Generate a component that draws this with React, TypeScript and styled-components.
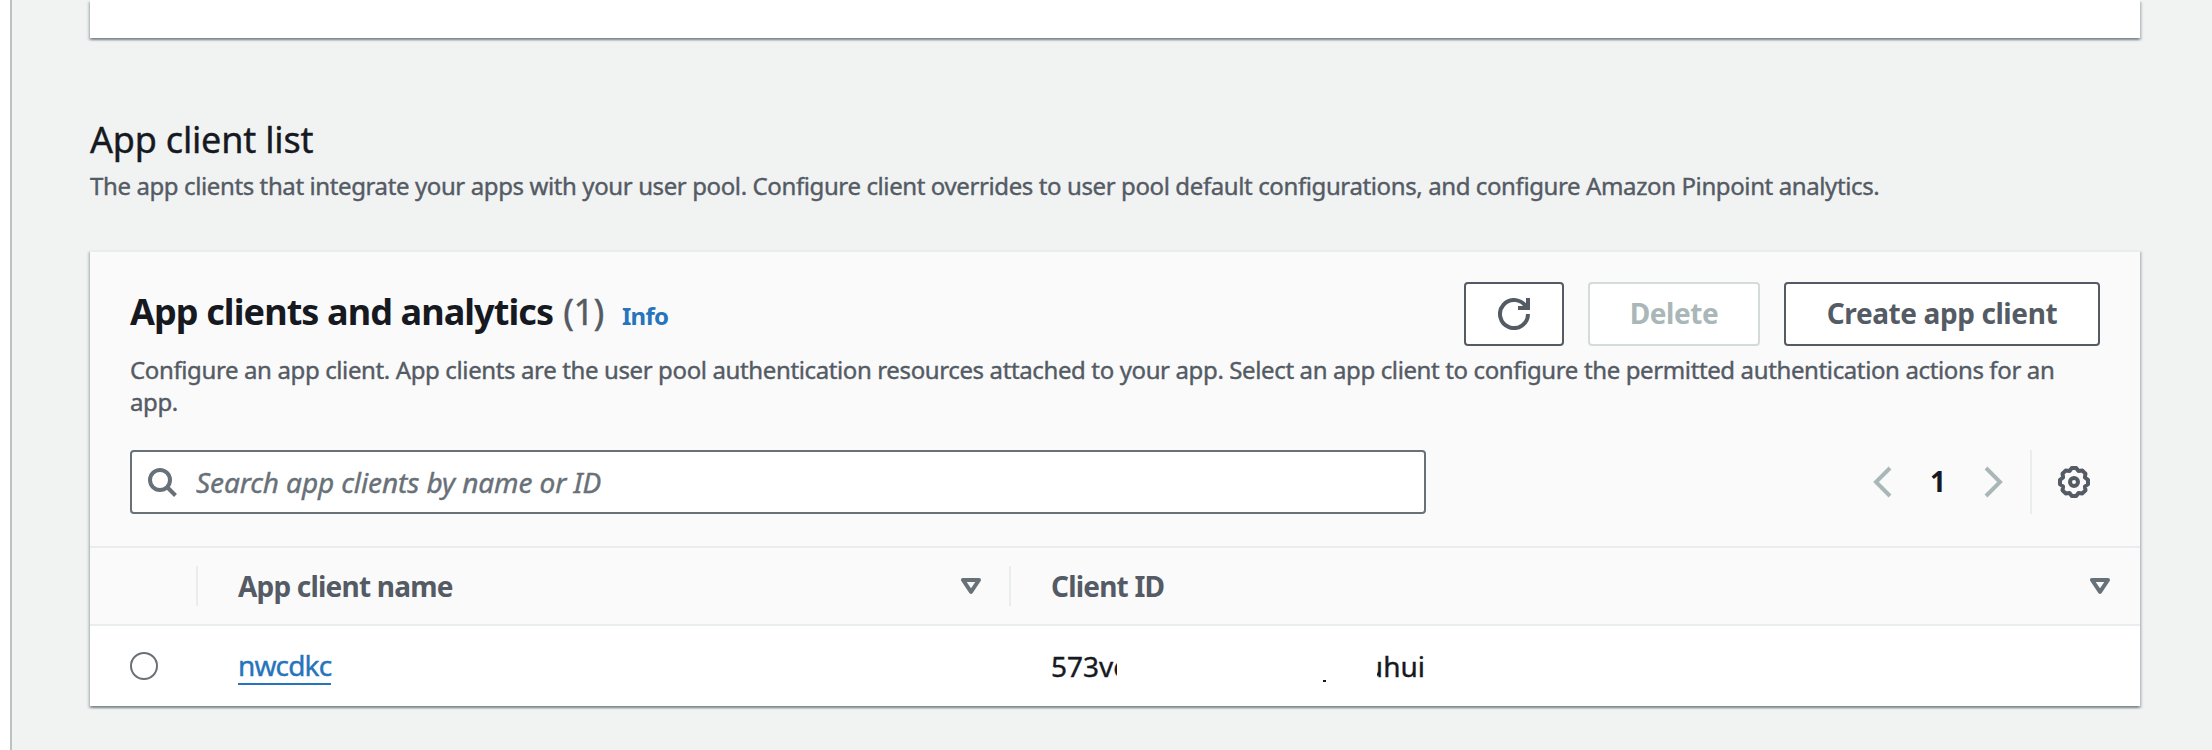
import React from "react";
import styled, { createGlobalStyle } from "styled-components";

const color = {
  page: "#f1f3f3",
  heading: "#16191f",
  text: "#545b64",
  icon: "#687078",
  disabled: "#aab7b8",
  disabledBorder: "#d5dbdb",
  divider: "#eaeded",
  link: "#2674bb",
};

const GlobalStyle = createGlobalStyle`
  * { box-sizing: border-box; }
  body {
    margin: 0;
    background: ${color.page};
    font-family: "Noto Sans", "Open Sans", sans-serif;
    color: ${color.heading};
  }
  h1, h2, p { margin: 0; }
`;

const Shell = styled.div`
  display: flex;
  height: 750px;
  overflow: hidden;
`;

const SideStrip = styled.div`
  flex: none;
  width: 12px;
  background: #fff;
  border-right: 2px solid #b9c3c4;
`;

const Content = styled.main`
  flex: none;
  width: 2128px;
  padding-left: 78px;
`;

const Panel = styled.section`
  background: #fff;
  box-shadow:
    0 2px 2px 0 rgba(0, 28, 36, 0.3),
    2px 2px 2px 0 rgba(0, 28, 36, 0.15),
    -2px 2px 2px 0 rgba(0, 28, 36, 0.15);
`;

const PreviousPanel = styled(Panel)`
  height: 38px;
`;

const ClientsPanel = styled(Panel)`
  margin-top: 48px;
  border-top: 2px solid ${color.divider};
`;

const PageHeading = styled.h1`
  margin-top: 80px;
  font-size: 36px;
  line-height: 44px;
  font-weight: 400;
  letter-spacing: -0.2px;
  -webkit-text-stroke: 0.4px;
`;

const Description = styled.p<{ $top: number; $spacing: number }>`
  margin-top: ${(p) => p.$top}px;
  font-size: 24px;
  line-height: 32px;
  letter-spacing: ${(p) => p.$spacing}px;
  color: ${color.text};
  -webkit-text-stroke: 0.4px;
`;

const PanelHeader = styled.header`
  padding: 30px 40px 32px;
  background: #fafafa;
  border-bottom: 2px solid ${color.divider};
`;

const HeaderRow = styled.div`
  display: flex;
  justify-content: space-between;
  align-items: flex-start;
`;

const TitleGroup = styled.div`
  display: flex;
  align-items: baseline;
  padding-top: 8px;
  line-height: 44px;
`;

const Title = styled.h2`
  font-size: 36px;
  font-weight: 700;
  letter-spacing: -0.9px;
`;

const Counter = styled.span`
  margin-left: 10px;
  font-size: 36px;
  letter-spacing: -0.5px;
  color: ${color.text};
  -webkit-text-stroke: 0.4px;
`;

const InfoLink = styled.a`
  margin-left: 18px;
  font-size: 24px;
  font-weight: 700;
  letter-spacing: -0.7px;
  color: ${color.link};
`;

const Actions = styled.div`
  display: flex;
  gap: 24px;
`;

const Button = styled.button<{ $width: number }>`
  display: flex;
  align-items: center;
  justify-content: center;
  width: ${(p) => p.$width}px;
  height: 64px;
  padding: 0 0 2px;
  border: 2px solid ${color.text};
  border-radius: 4px;
  background: #fff;
  font: 700 28px "Noto Sans", "Open Sans", sans-serif;
  letter-spacing: -0.4px;
  color: ${color.text};

  &:disabled {
    border-color: ${color.disabledBorder};
    color: ${color.disabled};
  }
`;

const IconButton = styled(Button)`
  padding: 0;
`;

const ToolRow = styled.div`
  display: flex;
  justify-content: space-between;
  height: 64px;
  margin-top: 32px;
`;

const SearchBox = styled.label`
  display: flex;
  align-items: center;
  width: 1296px;
  padding-left: 14px;
  border: 2px solid ${color.icon};
  border-radius: 4px;
  background: #fff;
`;

const SearchInput = styled.input`
  flex: 1;
  margin-left: 18px;
  padding: 0;
  border: 0;
  outline: 0;
  background: transparent;
  font: 400 28px "Noto Sans", "Open Sans", sans-serif;
  letter-spacing: -0.1px;
  -webkit-text-stroke: 0.4px;

  &::placeholder {
    color: ${color.icon};
    font-style: italic;
    opacity: 1;
  }
`;

const Pagination = styled.div`
  display: flex;
  align-items: center;
  margin-right: 10px;
`;

const PageNumber = styled.span`
  width: 92px;
  padding-bottom: 2px;
  font-size: 28px;
  font-weight: 700;
  text-align: center;
`;

const Divider = styled.span`
  width: 2px;
  height: 64px;
  margin: 0 26px;
  background: ${color.divider};
`;

const Row = styled.div`
  display: grid;
  grid-template-columns: 108px 813px 1fr;
  align-items: center;
`;

const ColumnRow = styled(Row)`
  height: 78px;
  background: #fafafa;
  border-bottom: 2px solid ${color.divider};
`;

const DataRow = styled(Row)`
  height: 80px;
  font-size: 28px;
  line-height: 38px;
  -webkit-text-stroke: 0.4px;
`;

const ColumnHeader = styled.div<{ $end: number; $divided?: boolean }>`
  display: flex;
  align-items: center;
  justify-content: space-between;
  height: 40px;
  padding: 0 ${(p) => p.$end}px 0 40px;
  border-right: ${(p) => (p.$divided ? `2px solid ${color.divider}` : "0")};
  font-size: 28px;
  font-weight: 700;
  line-height: 38px;
  color: ${color.text};
`;

const ColumnLabel = styled.span`
  padding-bottom: 1px;
  letter-spacing: -0.8px;
`;

const Cell = styled.div`
  display: flex;
  align-items: center;
  padding-left: 40px;
`;

const Radio = styled.span`
  width: 28px;
  height: 28px;
  border: 2px solid ${color.icon};
  border-radius: 50%;
`;

const ClientLink = styled.a`
  border-bottom: 2px solid ${color.link};
  line-height: 36px;
  letter-spacing: -0.85px;
  color: ${color.link};
`;

const IdPart = styled.span<{ $width: number; $fromEnd?: boolean }>`
  display: flex;
  justify-content: ${(p) => (p.$fromEnd ? "flex-end" : "flex-start")};
  width: ${(p) => p.$width}px;
  overflow: hidden;
  white-space: nowrap;
`;

const IdSpeck = styled.span`
  width: 3px;
  height: 2px;
  margin: 30px 51px 0 206px;
  background: ${color.heading};
`;

const RefreshIcon = () => (
  <svg width="32" height="32" viewBox="0 0 16 16" fill="none" stroke={color.text} strokeWidth="2">
    <path d="M10 5h5V0" />
    <path d="M15 8a7 7 0 1 1-.75-3.15" />
  </svg>
);

const SearchIcon = () => (
  <svg width="32" height="32" viewBox="0 0 32 32" fill="none" stroke={color.icon} strokeWidth="4">
    <circle cx="14" cy="14" r="10" />
    <path d="M21 21l8.5 8.5" />
  </svg>
);

const Chevron = ({ d }: { d: string }) => (
  <svg width="20" height="32" viewBox="0 0 20 32" fill="none" stroke={color.disabled} strokeWidth="4">
    <path d={d} />
  </svg>
);

const GearIcon = () => (
  <svg width="32" height="32" viewBox="-8 -8 16 16" fill="none" stroke={color.text} strokeWidth="2">
    <circle r="2" />
    <path
      strokeLinejoin="round"
      d="M-1.1-7H1.1L2.26-5.45 4.17-5.73 5.73-4.17 5.45-2.26 7-1.1V1.1L5.45 2.26 5.73 4.17 4.17 5.73 2.26 5.45 1.1 7H-1.1L-2.26 5.45-4.17 5.73-5.73 4.17-5.45 2.26-7 1.1V-1.1L-5.45-2.26-5.73-4.17-4.17-5.73-2.26-5.45Z"
    />
  </svg>
);

const SortIcon = () => (
  <svg width="20" height="16" viewBox="0 0 20 16" fill="none" stroke={color.icon} strokeWidth="4" strokeLinejoin="round">
    <path d="M2 2h16l-8 11.8z" />
  </svg>
);

export default function App() {
  return (
    <Shell>
      <GlobalStyle />
      <SideStrip />
      <Content>
        <PreviousPanel />
        <PageHeading>App client list</PageHeading>
        <Description $top={8} $spacing={-0.39}>
          The app clients that integrate your apps with your user pool. Configure client overrides to user pool
          default configurations, and configure Amazon Pinpoint analytics.
        </Description>
        <ClientsPanel>
          <PanelHeader>
            <HeaderRow>
              <TitleGroup>
                <Title>App clients and analytics</Title>
                <Counter>(1)</Counter>
                <InfoLink>Info</InfoLink>
              </TitleGroup>
              <Actions>
                <IconButton $width={100} aria-label="Refresh">
                  <RefreshIcon />
                </IconButton>
                <Button $width={172} disabled>
                  Delete
                </Button>
                <Button $width={316}>Create app client</Button>
              </Actions>
            </HeaderRow>
            <Description $top={8} $spacing={-0.375}>
              Configure an app client. App clients are the user pool authentication resources attached to your app.
              Select an app client to configure the permitted authentication actions for an app.
            </Description>
            <ToolRow>
              <SearchBox>
                <SearchIcon />
                <SearchInput placeholder="Search app clients by name or ID" />
              </SearchBox>
              <Pagination>
                <Chevron d="M18 2L4 16l14 14" />
                <PageNumber>1</PageNumber>
                <Chevron d="M2 2l14 14L2 30" />
                <Divider />
                <GearIcon />
              </Pagination>
            </ToolRow>
          </PanelHeader>
          <ColumnRow>
            <ColumnHeader $end={0} $divided />
            <ColumnHeader $end={28} $divided>
              <ColumnLabel>App client name</ColumnLabel>
              <SortIcon />
            </ColumnHeader>
            <ColumnHeader $end={30}>
              <ColumnLabel>Client ID</ColumnLabel>
              <SortIcon />
            </ColumnHeader>
          </ColumnRow>
          <DataRow>
            <Cell>
              <Radio />
            </Cell>
            <Cell>
              <ClientLink>nwcdkc</ClientLink>
            </Cell>
            <Cell>
              <IdPart $width={66}>573vc</IdPart>
              <IdSpeck />
              <IdPart $width={48} $fromEnd>
                uhui
              </IdPart>
            </Cell>
          </DataRow>
        </ClientsPanel>
      </Content>
    </Shell>
  );
}
